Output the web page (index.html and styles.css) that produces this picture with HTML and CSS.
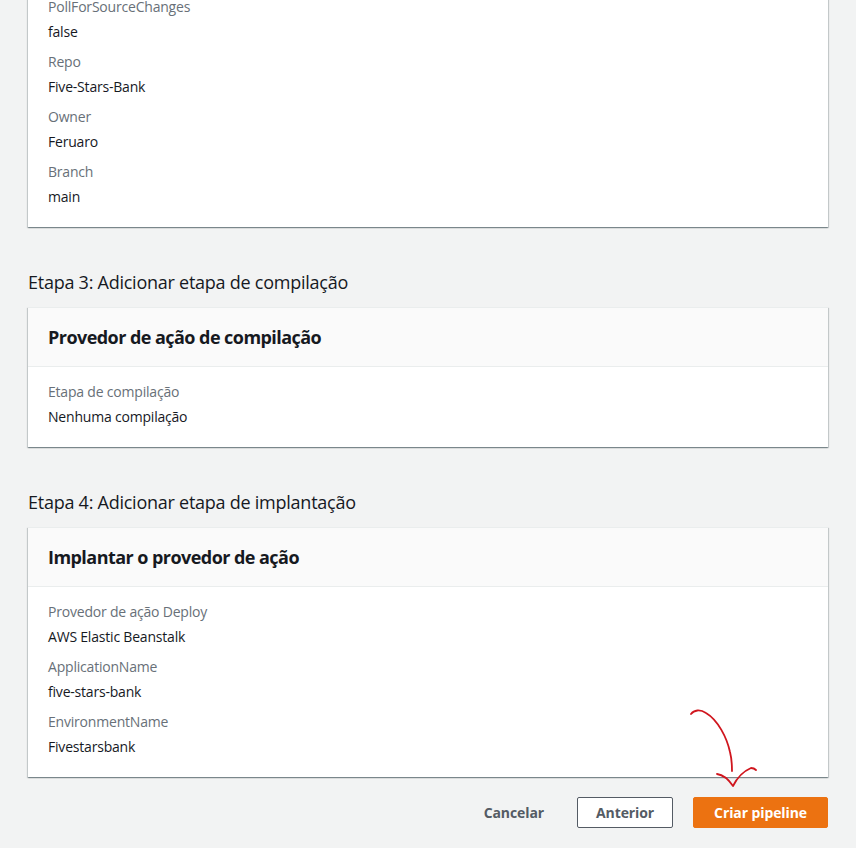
FILE: index.html
```html
<!DOCTYPE html>
<html lang="pt-BR">
<head>
<meta charset="utf-8">
<title>Revisar pipeline</title>
<link rel="stylesheet" href="styles.css">
</head>
<body>
<main class="page">
  <section class="card card-first">
    <div class="card-body">
      <div class="kv"><div class="label">PollForSourceChanges</div><div class="value">false</div></div>
      <div class="kv"><div class="label">Repo</div><div class="value">Five-Stars-Bank</div></div>
      <div class="kv"><div class="label">Owner</div><div class="value">Feruaro</div></div>
      <div class="kv"><div class="label">Branch</div><div class="value">main</div></div>
    </div>
  </section>

  <h2 class="step-title">Etapa 3: Adicionar etapa de compilação</h2>
  <section class="card">
    <header class="card-header"><h3>Provedor de ação de compilação</h3></header>
    <div class="card-body">
      <div class="kv"><div class="label">Etapa de compilação</div><div class="value">Nenhuma compilação</div></div>
    </div>
  </section>

  <h2 class="step-title">Etapa 4: Adicionar etapa de implantação</h2>
  <section class="card">
    <header class="card-header"><h3>Implantar o provedor de ação</h3></header>
    <div class="card-body">
      <div class="kv"><div class="label">Provedor de ação Deploy</div><div class="value">AWS Elastic Beanstalk</div></div>
      <div class="kv"><div class="label">ApplicationName</div><div class="value">five-stars-bank</div></div>
      <div class="kv"><div class="label">EnvironmentName</div><div class="value">Fivestarsbank</div></div>
    </div>
  </section>

  <div class="actions">
    <button class="btn btn-link">Cancelar</button>
    <button class="btn btn-normal">Anterior</button>
    <button class="btn btn-primary">Criar pipeline</button>
  </div>

  <svg class="annotation" width="80" height="90" viewBox="680 700 80 90" aria-hidden="true">
    <path d="M691 714 C694 710 700 709 706 713 C718 720 727 738 730 752 C732 760 732 766 732 771" fill="none" stroke="#d0161e" stroke-width="1.8" stroke-linecap="round"/>
    <path d="M717 774 C724 775 729 780 733 786 C737 778 744 771 751 768 C753 768 755 769 756 770" fill="none" stroke="#d0161e" stroke-width="1.8" stroke-linecap="round" stroke-linejoin="round"/>
  </svg>
</main>
</body>
</html>
```

FILE: styles.css
```css
* { box-sizing: border-box; }

html, body {
  margin: 0;
  padding: 0;
  background: #f2f3f3;
}

body {
  font-family: "Open Sans", "Noto Sans", Arial, sans-serif;
  color: #16191f;
  font-size: 14px;
  line-height: 20px;
  letter-spacing: -0.2px;
  overflow: hidden;
}

.page {
  display: flow-root;
  width: 856px;
  padding: 0 28px;
  position: relative;
}

.card {
  background: #ffffff;
  border-top: 1px solid #eaeded;
  box-shadow: 0 1px 1px 0 rgba(0, 28, 36, 0.3),
              1px 1px 1px 0 rgba(0, 28, 36, 0.15),
              -1px 1px 1px 0 rgba(0, 28, 36, 0.15);
}

.card-first {
  margin-top: -40px;
  border-top: none;
}

.card-first .card-body {
  padding-top: 37px;
}

.card-header {
  background: #fafafa;
  border-bottom: 1px solid #eaeded;
  height: 59px;
  padding: 0 20px;
  display: flex;
  align-items: center;
}

.card-header h3 {
  margin: 0;
  font-size: 18px;
  line-height: 22px;
  font-weight: 700;
  letter-spacing: -0.55px;
  color: #16191f;
}

.card-body {
  padding: 15px 20px 20px;
  display: flex;
  flex-direction: column;
  gap: 10px;
}

.kv {
  display: flex;
  flex-direction: column;
  gap: 5px;
}

.label {
  color: #687078;
}

.value {
  color: #16191f;
}

.step-title {
  margin: 44px 0 14px;
  font-size: 18px;
  line-height: 22px;
  font-weight: 400;
  letter-spacing: -0.25px;
  color: #16191f;
}

.actions {
  display: flex;
  justify-content: flex-end;
  align-items: center;
  gap: 20px;
  margin-top: 20px;
}

.btn {
  font-family: inherit;
  font-size: 14px;
  font-weight: 700;
  line-height: 20px;
  height: 31px;
  padding: 4px 20px;
  border-radius: 2px;
  cursor: pointer;
  letter-spacing: -0.1px;
}

.btn-link {
  background: transparent;
  border: 1px solid transparent;
  color: #545b64;
  padding: 4px 12px 4px 20px;
}

.btn-normal {
  background: #ffffff;
  border: 1px solid #545b64;
  color: #545b64;
  padding: 4px 18px;
}

.btn-primary {
  background: #ec7211;
  border: 1px solid #ec7211;
  color: #ffffff;
}

.annotation {
  position: absolute;
  left: 680px;
  top: 700px;
  pointer-events: none;
}
```
